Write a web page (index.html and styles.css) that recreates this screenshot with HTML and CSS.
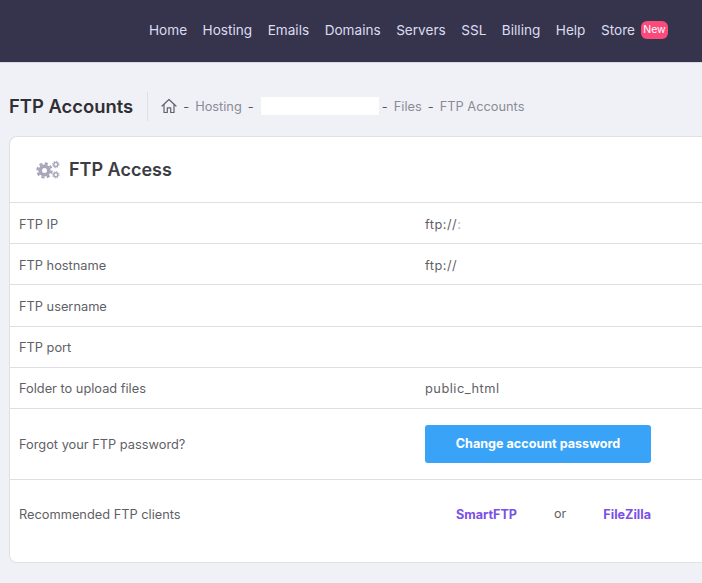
FILE: index.html
```html
<!DOCTYPE html>
<html lang="en">
<head>
<meta charset="utf-8">
<title>FTP Accounts</title>
<link rel="stylesheet" href="styles.css">
</head>
<body>
<header class="topbar">
  <nav class="nav">
    <a>Home</a><a>Hosting</a><a>Emails</a><a>Domains</a><a>Servers</a><a>SSL</a><a>Billing</a><a>Help</a>
    <a class="store">Store <span class="badge">New</span></a>
  </nav>
</header>
<main class="page">
  <div class="titlebar">
    <h1 class="title">FTP Accounts</h1>
    <div class="crumbs">
      <svg class="home" width="16" height="16" viewBox="0 0 16 16" fill="none" stroke="#63606f" stroke-width="1.2" stroke-linejoin="round" stroke-linecap="round"><path d="M1 8 8 1.500 15 8"/><path d="M3 6.500V14.500H6.300V9.800H9.700V14.500H13V6.500"/></svg>
      <span class="sep">-</span><span>Hosting</span><span class="sep">-</span>
      <span class="redact"></span>
      <span class="sep">-</span><span>Files</span><span class="sep">-</span><span>FTP Accounts</span>
    </div>
  </div>
  <section class="card">
    <div class="card-head">
      <svg class="gears" width="24" height="20" viewBox="0 0 24 20" fill="none" stroke="#a9a6bb">
        <circle cx="8.500" cy="10.500" r="4.300" stroke-width="3.600"/>
        <circle cx="8.500" cy="10.500" r="7" stroke-width="2.400" stroke-dasharray="3.100 2.400"/>
        <circle cx="19.800" cy="4.500" r="2" stroke-width="1.500"/>
        <circle cx="19.800" cy="4.500" r="3.200" stroke-width="1" stroke-dasharray="1.400 1.100"/>
        <circle cx="19.800" cy="14.800" r="2" stroke-width="1.500"/>
        <circle cx="19.800" cy="14.800" r="3.200" stroke-width="1" stroke-dasharray="1.400 1.100"/>
      </svg>
      <h2 class="card-title">FTP Access</h2>
    </div>
    <div class="row"><span class="cell">FTP IP</span><span class="cell val">ftp://<span class="faint">:</span></span></div>
    <div class="row"><span class="cell">FTP hostname</span><span class="cell val">ftp://</span></div>
    <div class="row"><span class="cell">FTP username</span><span></span></div>
    <div class="row"><span class="cell">FTP port</span><span></span></div>
    <div class="row"><span class="cell">Folder to upload files</span><span class="cell val">public_html</span></div>
    <div class="row row-button"><span class="cell">Forgot your FTP password?</span><span><a class="btn">Change account password</a></span></div>
    <div class="row row-clients"><span>Recommended FTP clients</span>
      <span class="clients"><a>SmartFTP</a><span class="or">or</span><a>FileZilla</a></span>
    </div>
  </section>
</main>
</body>
</html>
```
FILE: styles.css
```css
* { box-sizing: border-box; }
html, body { margin: 0; height: 100%; overflow: hidden; }
body {
  background: #f0f1f6;
  font-family: "Inter", "Liberation Sans", sans-serif;
  font-size: 12.800px;
  color: #5f5f67;
}
.topbar {
  height: 63px;
  background: #36344d;
  border-bottom: 1px solid #d9d9df;
  display: flex;
  align-items: center;
}
.nav {
  display: flex;
  align-items: center;
  gap: 15.500px;
  padding: 0 0 2px 149px;
  color: #dcdcf0;
  font-size: 13.600px;
  white-space: nowrap;
}
.store { display: flex; align-items: center; gap: 6px; }
.badge {
  background: #fb4a7c;
  color: #fff;
  font-size: 10.500px;
  line-height: 18px;
  height: 18px;
  width: 27px;
  text-align: center;
  border-radius: 6px;
}
.page { padding: 0 0 0 9px; }
.titlebar {
  display: flex;
  align-items: center;
  height: 73px;
  padding-top: 13px;
}
.title {
  margin: 0;
  font-size: 18.400px;
  font-weight: 600;
  color: #2f2f35;
  padding-right: 14px;
  border-right: 1px solid #dfdfe5;
  line-height: 29px;
}
.crumbs {
  display: flex;
  align-items: center;
  gap: 6px;
  padding-left: 13px;
  color: #8b8b98;
  font-size: 12.800px;
}
.sep { color: #55555d; width: 6px; text-align: center; }
.redact { width: 118px; height: 18px; background: #fff; margin: 0 -3px 0 1px; }
.card {
  height: 427px;
  background: #fff;
  border: 1px solid #e0e0e5;
  border-right: none;
  border-radius: 8px 0 0 8px;
}
.card-head {
  height: 65px;
  display: flex;
  align-items: center;
  gap: 9px;
  padding-left: 26px;
}
.card-title {
  margin: 0;
  font-size: 18px;
  font-weight: 600;
  color: #3c3c44;
}
.row {
  display: grid;
  grid-template-columns: 406px 1fr;
  align-items: center;
  height: 41.200px;
  padding-left: 9px;
  border-top: 1px solid #dfdfe3;
}
.cell { padding-top: 2px; }
.val { letter-spacing: .5px; }
.faint { opacity: .5; }
.row-button { height: 71px; }
.row-clients { height: 83px; padding-bottom: 13px; }
.btn {
  display: block;
  width: 226px;
  height: 38px;
  line-height: 38px;
  text-align: center;
  color: #fff;
  font-size: 12.600px;
  font-weight: 700;
  background: #38a3f7;
  border-radius: 3px;
}
.clients { display: flex; align-items: center; padding-left: 31px; font-size: 12.600px; }
.clients a { color: #7a50e8; font-weight: 700; }
.or { margin: 0 37px; position: relative; top: -1px; }
```
